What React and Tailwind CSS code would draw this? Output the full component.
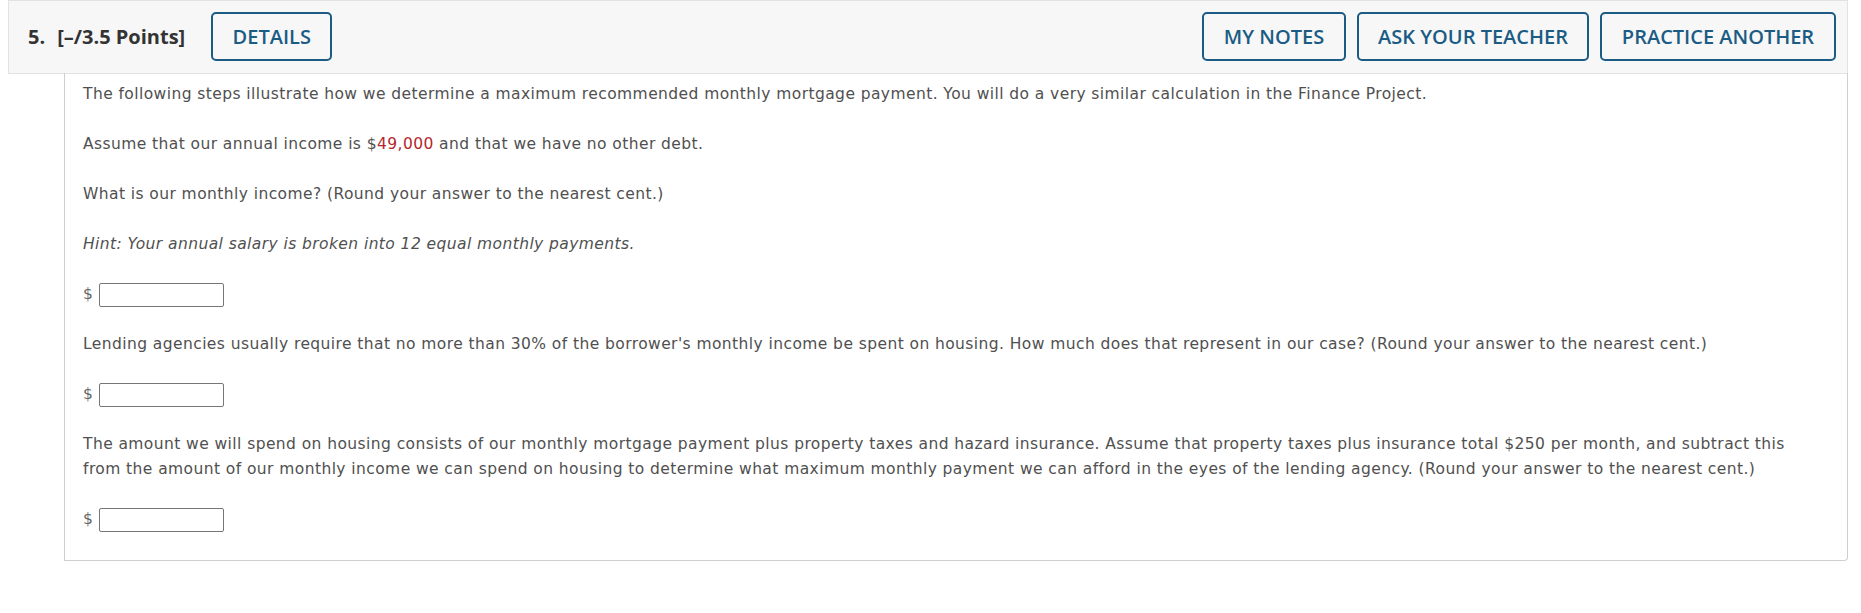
import React from 'react';

function HeaderButton({ children, className = '' }) {
  return (
    <button
      type="button"
      className={`h-[49px] rounded-[5px] border-2 border-[#1b5c84] bg-[#f7f7f7] text-[20px] font-semibold text-[#1b5c84] [font-family:'Open_Sans',sans-serif] ${className}`}
    >
      {children}
    </button>
  );
}

function AnswerRow() {
  return (
    <div className="flex h-[25px] items-center">
      <span className="w-[16px] text-[#666]">$</span>
      <input
        type="text"
        className="h-[24px] w-[125px] rounded-[2px] border border-[#767676] bg-white"
      />
    </div>
  );
}

export default function App() {
  return (
    <div className="min-h-screen bg-white pl-[8px] pr-[13px]">
      <div className="flex h-[74px] items-start border border-[#e3e3e3] bg-[#f7f7f7] pl-[19px] pr-[11px] pt-[11px] [font-family:'Open_Sans',sans-serif]">
        <div className="flex h-[50px] items-center text-[20px] font-bold text-[#333]">
          <span>5.</span>
          <span className="ml-[12px]">[–/3.5 Points]</span>
        </div>
        <HeaderButton className="ml-[26px] w-[121px]">DETAILS</HeaderButton>
        <div className="ml-auto flex gap-[11px]">
          <HeaderButton className="w-[144px]">MY NOTES</HeaderButton>
          <HeaderButton className="w-[232px]">ASK YOUR TEACHER</HeaderButton>
          <HeaderButton className="w-[236px]">PRACTICE ANOTHER</HeaderButton>
        </div>
      </div>
      <div className="-mt-px ml-[56px] rounded-br-[4px] border border-t-0 border-[#cfcfcf] pb-[28px] pl-[18px] pr-[30px] pt-[9px] font-[Verdana,'DejaVu_Sans',sans-serif] text-[15.5px] leading-[25px] tracking-[0.42px] text-[#505050]">
        <p className="mb-[25px]">
          The following steps illustrate how we determine a maximum recommended monthly mortgage payment. You will do a very similar calculation in the Finance Project.
        </p>
        <p className="mb-[25px]">
          Assume that our annual income is $<span className="text-[#b3272d]">49,000</span> and that we have no other debt.
        </p>
        <p className="mb-[25px]">What is our monthly income? (Round your answer to the nearest cent.)</p>
        <p className="mb-[25px] italic">Hint: Your annual salary is broken into 12 equal monthly payments.</p>
        <AnswerRow />
        <p className="mb-[25px] mt-[25px]">
          Lending agencies usually require that no more than 30% of the borrower's monthly income be spent on housing. How much does that represent in our case? (Round your answer to the nearest cent.)
        </p>
        <AnswerRow />
        <p className="mb-[25px] mt-[25px]">
          The amount we will spend on housing consists of our monthly mortgage payment plus property taxes and hazard insurance. Assume that property taxes plus insurance total $250 per month, and subtract this from the amount of our monthly income we can spend on housing to determine what maximum monthly payment we can afford in the eyes of the lending agency. (Round your answer to the nearest cent.)
        </p>
        <AnswerRow />
      </div>
    </div>
  );
}
